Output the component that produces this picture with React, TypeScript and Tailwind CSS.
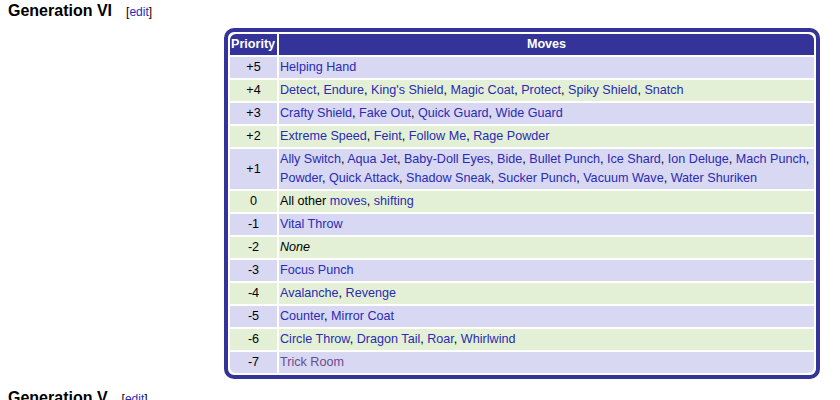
type Part = { t: string; link?: boolean; visited?: boolean; italic?: boolean };

type Row = { p: string; moves: Part[] };

const L = (t: string, visited = false): Part => ({ t, link: true, visited });
const T = (t: string, italic = false): Part => ({ t, italic });

const rows: Row[] = [
  { p: '+5', moves: [L('Helping Hand')] },
  {
    p: '+4',
    moves: [L('Detect'), T(', '), L('Endure'), T(', '), L("King's Shield"), T(', '), L('Magic Coat'), T(', '), L('Protect'), T(', '), L('Spiky Shield'), T(', '), L('Snatch')],
  },
  { p: '+3', moves: [L('Crafty Shield'), T(', '), L('Fake Out'), T(', '), L('Quick Guard'), T(', '), L('Wide Guard')] },
  { p: '+2', moves: [L('Extreme Speed'), T(', '), L('Feint'), T(', '), L('Follow Me'), T(', '), L('Rage Powder')] },
  {
    p: '+1',
    moves: [
      L('Ally Switch'), T(', '), L('Aqua Jet'), T(', '), L('Baby-Doll Eyes'), T(', '), L('Bide'), T(', '), L('Bullet Punch'), T(', '),
      L('Ice Shard'), T(', '), L('Ion Deluge'), T(', '), L('Mach Punch'), T(', '), L('Powder'), T(', '), L('Quick Attack'), T(', '),
      L('Shadow Sneak'), T(', '), L('Sucker Punch'), T(', '), L('Vacuum Wave'), T(', '), L('Water Shuriken'),
    ],
  },
  { p: '0', moves: [T('All other '), L('moves'), T(', '), L('shifting')] },
  { p: '-1', moves: [L('Vital Throw')] },
  { p: '-2', moves: [T('None', true)] },
  { p: '-3', moves: [L('Focus Punch')] },
  { p: '-4', moves: [L('Avalanche'), T(', '), L('Revenge')] },
  { p: '-5', moves: [L('Counter'), T(', '), L('Mirror Coat')] },
  { p: '-6', moves: [L('Circle Throw'), T(', '), L('Dragon Tail'), T(', '), L('Roar'), T(', '), L('Whirlwind')] },
  { p: '-7', moves: [L('Trick Room', true)] },
];

function Heading({ title }: { title: string }) {
  return (
    <div className="flex items-baseline pl-[8px] h-[20px] pt-[2px]">
      <span className="text-[16px] font-bold text-black leading-[18px]">{title}</span>
      <span className="ml-[14px] text-[12px] text-black leading-[18px]">
        [<span className="text-[#2a2ab5]">edit</span>]
      </span>
    </div>
  );
}

export default function App() {
  return (
    <div className="w-[840px] h-[400px] overflow-hidden bg-white font-['Liberation_Sans',Arial,sans-serif]">
      <Heading title="Generation VI" />

      <div className="ml-[224px] mt-[8px] w-[596px] rounded-[10px] border-4 border-[#333399] bg-white">
        <table className="w-full border-separate border-spacing-[2px] text-[12.6px] leading-[19px]">
          <thead>
            <tr>
              <th className="w-[47px] rounded-tl-[6px] bg-[#333399] px-[1px] py-[1px] text-left font-bold text-white">Priority</th>
              <th className="rounded-tr-[6px] bg-[#333399] px-[1px] py-[1px] text-center font-bold text-white">Moves</th>
            </tr>
          </thead>
          <tbody>
            {rows.map((row, i) => {
              const bg = i % 2 === 0 ? 'bg-[#d8d8f2]' : 'bg-[#e3f0d6]';
              const last = i === rows.length - 1;
              return (
                <tr key={row.p}>
                  <td className={`${bg} ${last ? 'rounded-bl-[6px]' : ''} px-[1px] py-[1px] text-center text-black`}>{row.p}</td>
                  <td className={`${bg} ${last ? 'rounded-br-[6px]' : ''} px-[1px] py-[1px] text-left text-black`}>
                    {row.moves.map((m, j) =>
                      m.link ? (
                        <span key={j} className={m.visited ? 'text-[#6b4a8f]' : 'text-[#2a2ab5]'}>
                          {m.t}
                        </span>
                      ) : (
                        <span key={j} className={m.italic ? 'italic' : ''}>
                          {m.t}
                        </span>
                      )
                    )}
                  </td>
                </tr>
              );
            })}
          </tbody>
        </table>
      </div>

      <div className="mt-[8px]">
        <Heading title="Generation V" />
      </div>
    </div>
  );
}
